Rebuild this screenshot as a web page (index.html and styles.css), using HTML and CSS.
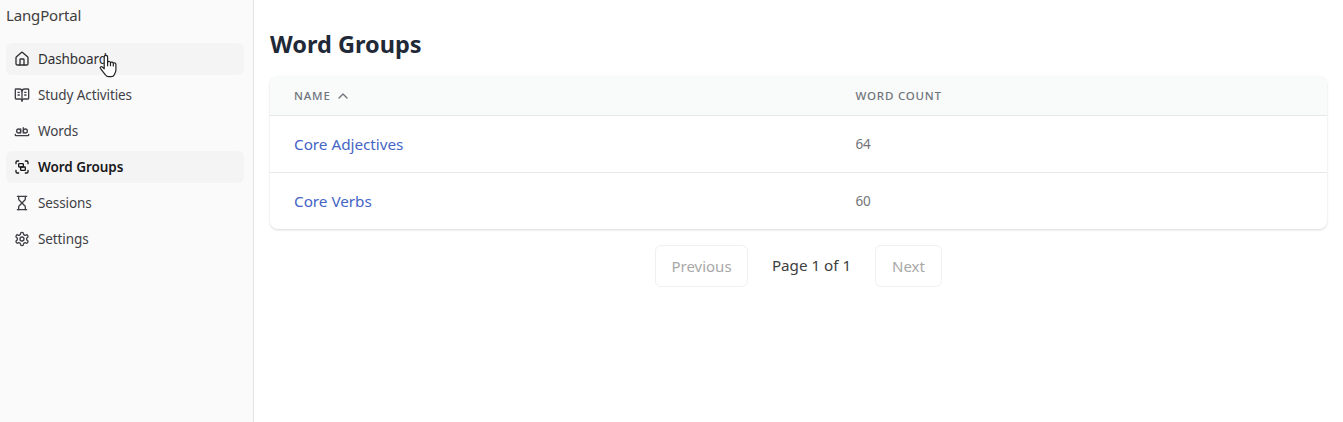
FILE: index.html
```html
<!DOCTYPE html>
<html lang="en">
<head>
<meta charset="utf-8">
<title>LangPortal</title>
<link rel="stylesheet" href="styles.css">
</head>
<body>
<div class="app">
  <aside class="sidebar">
    <div class="brand">LangPortal</div>
    <nav class="menu">
      <a class="item hovered"><svg class="icon" viewBox="0 0 24 24"><path d="M15 21v-8a1 1 0 0 0-1-1h-4a1 1 0 0 0-1 1v8"/><path d="M3 10a2 2 0 0 1 .709-1.528l7-5.999a2 2 0 0 1 2.582 0l7 5.999A2 2 0 0 1 21 10v9a2 2 0 0 1-2 2H5a2 2 0 0 1-2-2z"/></svg><span>Dashboard</span></a>
      <a class="item"><svg class="icon" viewBox="0 0 24 24"><path d="M12 7v14"/><path d="M16 12h2"/><path d="M16 8h2"/><path d="M3 18a1 1 0 0 1-1-1V4a1 1 0 0 1 1-1h5a4 4 0 0 1 4 4 4 4 0 0 1 4-4h5a1 1 0 0 1 1 1v13a1 1 0 0 1-1 1h-6a3 3 0 0 0-3 3 3 3 0 0 0-3-3z"/><path d="M6 12h2"/><path d="M6 8h2"/></svg><span>Study Activities</span></a>
      <a class="item"><svg class="icon" viewBox="0 0 24 24"><circle cx="7" cy="12" r="3"/><path d="M10 9v6"/><circle cx="17" cy="12" r="3"/><path d="M14 7v8"/><path d="M22 17v1c0 .5-.5 1-1 1H3c-.5 0-1-.5-1-1v-1"/></svg><span>Words</span></a>
      <a class="item active"><svg class="icon" viewBox="0 0 24 24"><path d="M3 7V5c0-1.1.9-2 2-2h2"/><path d="M17 3h2c1.1 0 2 .9 2 2v2"/><path d="M21 17v2c0 1.1-.9 2-2 2h-2"/><path d="M7 21H5c-1.1 0-2-.9-2-2v-2"/><rect width="7" height="5" x="7" y="7" rx="1"/><rect width="7" height="5" x="10" y="12" rx="1"/></svg><span>Word Groups</span></a>
      <a class="item"><svg class="icon" viewBox="0 0 24 24"><path d="M5 22h14"/><path d="M5 2h14"/><path d="M17 22v-4.172a2 2 0 0 0-.586-1.414L12 12l-4.414 4.414A2 2 0 0 0 7 17.828V22"/><path d="M7 2v4.172a2 2 0 0 0 .586 1.414L12 12l4.414-4.414A2 2 0 0 0 17 6.172V2"/></svg><span>Sessions</span></a>
      <a class="item"><svg class="icon" viewBox="0 0 24 24"><path d="M12.22 2h-.44a2 2 0 0 0-2 2v.18a2 2 0 0 1-1 1.73l-.43.25a2 2 0 0 1-2 0l-.15-.08a2 2 0 0 0-2.73.73l-.22.38a2 2 0 0 0 .73 2.73l.15.1a2 2 0 0 1 1 1.72v.51a2 2 0 0 1-1 1.74l-.15.09a2 2 0 0 0-.73 2.73l.22.38a2 2 0 0 0 2.73.73l.15-.08a2 2 0 0 1 2 0l.43.25a2 2 0 0 1 1 1.73V20a2 2 0 0 0 2 2h.44a2 2 0 0 0 2-2v-.18a2 2 0 0 1 1-1.73l.43-.25a2 2 0 0 1 2 0l.15.08a2 2 0 0 0 2.73-.73l.22-.39a2 2 0 0 0-.73-2.73l-.15-.08a2 2 0 0 1-1-1.74v-.5a2 2 0 0 1 1-1.74l.15-.09a2 2 0 0 0 .73-2.73l-.22-.38a2 2 0 0 0-2.73-.73l-.15.08a2 2 0 0 1-2 0l-.43-.25a2 2 0 0 1-1-1.73V4a2 2 0 0 0-2-2z"/><circle cx="12" cy="12" r="3"/></svg><span>Settings</span></a>
    </nav>
  </aside>
  <main class="content">
    <h1 class="title">Word Groups</h1>
    <section class="card">
      <div class="row head">
        <div class="cell"><span>Name</span><svg class="sort" viewBox="0 0 24 24"><path d="m18 15-6-6-6 6"/></svg></div>
        <div class="cell"><span>Word Count</span></div>
      </div>
      <div class="row"><div class="cell"><a class="link">Core Adjectives</a></div><div class="cell count">64</div></div>
      <div class="row"><div class="cell"><a class="link">Core Verbs</a></div><div class="cell count">60</div></div>
    </section>
    <div class="pager">
      <button class="page-button previous" disabled>Previous</button>
      <span class="page-label">Page 1 of 1</span>
      <button class="page-button next" disabled>Next</button>
    </div>
  </main>
</div>
<svg class="pointer" viewBox="0 0 18 24"><path d="M5.2 14.8V3a1.7 1.7 0 0 1 3.4 0v5.2a1.6 1.6 0 0 1 2.9.5 1.6 1.6 0 0 1 2.8.7 1.5 1.5 0 0 1 2.6 1.1v5.2c0 2.4-1 3.5-1.6 5-.5 1.400-1.700 2-3.200 2H9.600c-1.500 0-2.500-.7-3.200-1.900L1.400 14.300c-.6-1.100.7-2.200 1.800-1.400z"/><path d="M8.600 8v4.200M11.500 8.700v3.600M14.300 9.500v3"/></svg>
</body>
</html>
```
FILE: styles.css
```css
* { box-sizing: border-box; }
body {
  margin: 0;
  height: 422px;
  overflow: hidden;
  background: #fff;
  color: #404040;
  font-family: "Noto Sans", "Open Sans", sans-serif;
}
.app { display: flex; height: 100%; }
.sidebar {
  flex: 0 0 254px;
  padding: 3px 9px 0 6px;
  background: #fafafa;
  border-right: 1px solid #e5e5e8;
}
.brand { height: 40px; font-size: 15px; line-height: 24px; letter-spacing: -.15px; }
.menu { display: flex; flex-direction: column; gap: 4px; }
.item {
  display: flex;
  align-items: center;
  gap: 8px;
  height: 32px;
  padding: 0 8px;
  border-radius: 6px;
  font-size: 13.5px;
  line-height: 20px;
  letter-spacing: -.1px;
  color: #3f3f46;
  white-space: nowrap;
}
.hovered, .active { background: #f4f4f4; color: #303033; }
.active { color: #18181b; font-weight: 600; letter-spacing: -.05px; }
.icon, .sort {
  flex: none;
  width: 16px;
  height: 16px;
  fill: none;
  stroke: currentColor;
  stroke-width: 2;
  stroke-linecap: round;
  stroke-linejoin: round;
}
.content { flex: 1; padding: 28px 16px 0; }
.title {
  margin: 0 0 16px;
  color: #1f2937;
  font-size: 23.5px;
  line-height: 32px;
  font-weight: 700;
}
.card {
  overflow: hidden;
  border-radius: 8px;
  box-shadow: 0 1px 3px rgba(0, 0, 0, .1), 0 1px 2px rgba(0, 0, 0, .06);
}
.row {
  display: grid;
  grid-template-columns: 561.5px 1fr;
  align-items: center;
  height: 57px;
  border-bottom: 1px solid #e5e7eb;
}
.row:last-child { height: 56px; border-bottom: 0; }
.head {
  height: 40px;
  background: #f9fafa;
  color: #6f757c;
  font-size: 11.5px;
  font-weight: 500;
  letter-spacing: .8px;
  text-transform: uppercase;
}
.cell { display: flex; align-items: center; gap: 4px; padding: 0 24px; }
.link { font-size: 15.3px; letter-spacing: -.03px; color: #4565c5; }
.count { font-size: 13.5px; color: #737579; letter-spacing: -.15px; }
.pager {
  display: flex;
  justify-content: center;
  align-items: center;
  margin-top: 16px;
}
.page-button {
  height: 42px;
  padding: 0;
  border: 1px solid #f0f0f1;
  border-radius: 6px;
  background: #fff;
  color: #a8a8a8;
  font: 15px "Noto Sans", sans-serif;
}
.previous { width: 93px; }
.next { width: 67px; }
.page-label { width: 127px; padding-bottom: 2px; text-align: center; font-size: 15.2px; white-space: nowrap; }
.pointer {
  position: absolute;
  left: 99px;
  top: 54px;
  width: 18px;
  height: 24px;
  fill: #fff;
  stroke: #222;
  stroke-width: 1.2;
  stroke-linejoin: round;
}
```
